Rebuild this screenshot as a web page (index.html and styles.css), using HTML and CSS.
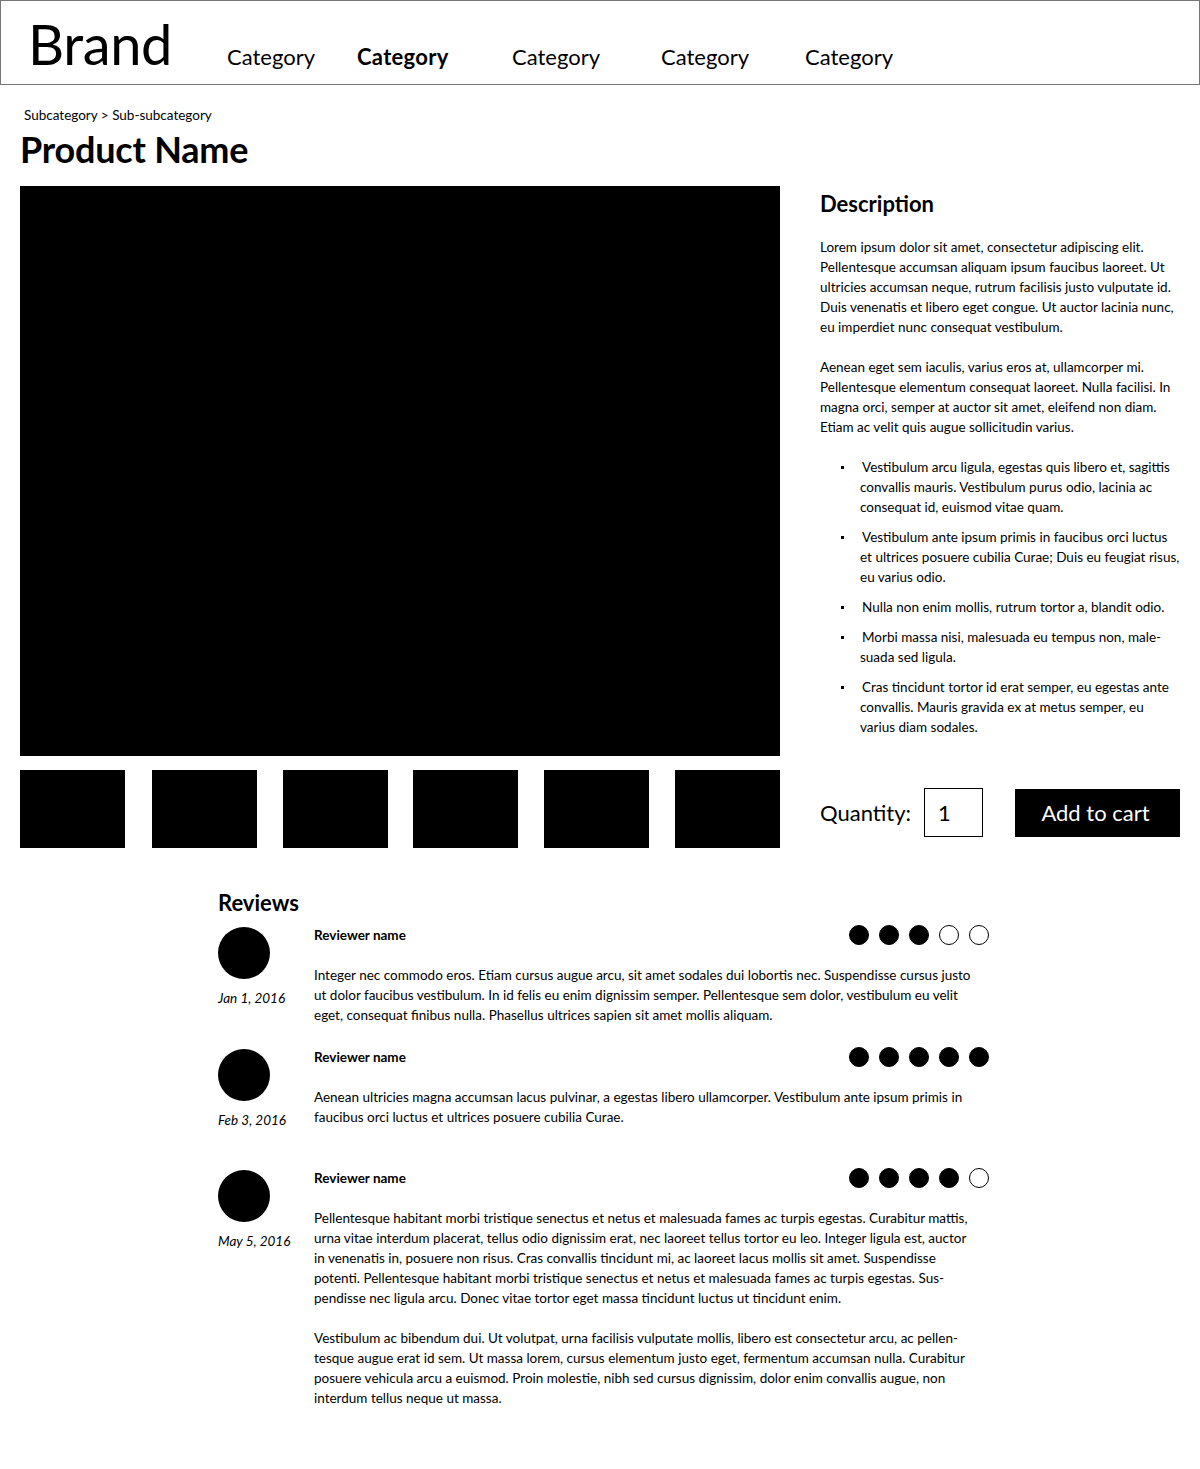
FILE: index.html
```html
<!DOCTYPE html>
<html lang="en">
<head>
<meta charset="utf-8">
<title>Product</title>
<link rel="stylesheet" href="styles.css">
</head>
<body>
<header class="topbar">
  <div class="brand">Brand</div>
  <nav class="nav">
    <a class="nav-item">Category</a>
    <a class="nav-item active">Category</a>
    <a class="nav-item">Category</a>
    <a class="nav-item">Category</a>
    <a class="nav-item">Category</a>
  </nav>
</header>

<main class="page">
  <div class="crumbs">Subcategory &gt; Sub-subcategory</div>
  <h1 class="title">Product Name</h1>

  <section class="product">
    <div class="gallery">
      <div class="main-image"></div>
      <div class="thumbs">
        <div class="thumb"></div>
        <div class="thumb"></div>
        <div class="thumb"></div>
        <div class="thumb"></div>
        <div class="thumb"></div>
        <div class="thumb"></div>
      </div>
    </div>
    <div class="info">
      <div class="desc">
        <h2 class="desc-title">Description</h2>
        <p class="text">Lorem ipsum dolor sit amet, consectetur adipiscing elit.<br>Pellentesque accumsan aliquam ipsum faucibus laoreet. Ut<br>ultricies accumsan neque, rutrum facilisis justo vulputate id.<br>Duis venenatis et libero eget congue. Ut auctor lacinia nunc,<br>eu imperdiet nunc consequat vestibulum.</p>
        <p class="text">Aenean eget sem iaculis, varius eros at, ullamcorper mi.<br>Pellentesque elementum consequat laoreet. Nulla facilisi. In<br>magna orci, semper at auctor sit amet, eleifend non diam.<br>Etiam ac velit quis augue sollicitudin varius.</p>
        <ul class="bullets">
          <li>Vestibulum arcu ligula, egestas quis libero et, sagittis<br>convallis mauris. Vestibulum purus odio, lacinia ac<br>consequat id, euismod vitae quam.</li>
          <li>Vestibulum ante ipsum primis in faucibus orci luctus<br>et ultrices posuere cubilia Curae; Duis eu feugiat risus,<br>eu varius odio.</li>
          <li>Nulla non enim mollis, rutrum tortor a, blandit odio.</li>
          <li>Morbi massa nisi, malesuada eu tempus non, male-<br>suada sed ligula.</li>
          <li>Cras tincidunt tortor id erat semper, eu egestas ante<br>convallis. Mauris gravida ex at metus semper, eu<br>varius diam sodales.</li>
        </ul>
      </div>
      <div class="buy">
        <span class="qty-label">Quantity:</span>
        <div class="qty-box">1</div>
        <button class="cart-btn">Add to cart</button>
      </div>
    </div>
  </section>

  <section class="reviews">
    <h2 class="reviews-title">Reviews</h2>

    <article class="review">
      <div class="who">
        <div class="avatar"></div>
        <div class="date">Jan 1, 2016</div>
      </div>
      <div class="body">
        <div class="head">
          <span class="name">Reviewer name</span>
          <span class="stars"><i class="dot on"></i><i class="dot on"></i><i class="dot on"></i><i class="dot"></i><i class="dot"></i></span>
        </div>
        <p class="text">Integer nec commodo eros. Etiam cursus augue arcu, sit amet sodales dui lobortis nec. Suspendisse cursus justo<br>ut dolor faucibus vestibulum. In id felis eu enim dignissim semper. Pellentesque sem dolor, vestibulum eu velit<br>eget, consequat finibus nulla. Phasellus ultrices sapien sit amet mollis aliquam.</p>
      </div>
    </article>

    <article class="review">
      <div class="who">
        <div class="avatar"></div>
        <div class="date">Feb 3, 2016</div>
      </div>
      <div class="body">
        <div class="head">
          <span class="name">Reviewer name</span>
          <span class="stars"><i class="dot on"></i><i class="dot on"></i><i class="dot on"></i><i class="dot on"></i><i class="dot on"></i></span>
        </div>
        <p class="text">Aenean ultricies magna accumsan lacus pulvinar, a egestas libero ullamcorper. Vestibulum ante ipsum primis in<br>faucibus orci luctus et ultrices posuere cubilia Curae.</p>
      </div>
    </article>

    <article class="review">
      <div class="who">
        <div class="avatar"></div>
        <div class="date">May 5, 2016</div>
      </div>
      <div class="body">
        <div class="head">
          <span class="name">Reviewer name</span>
          <span class="stars"><i class="dot on"></i><i class="dot on"></i><i class="dot on"></i><i class="dot on"></i><i class="dot"></i></span>
        </div>
        <p class="text">Pellentesque habitant morbi tristique senectus et netus et malesuada fames ac turpis egestas. Curabitur mattis,<br>urna vitae interdum placerat, tellus odio dignissim erat, nec laoreet tellus tortor eu leo. Integer ligula est, auctor<br>in venenatis in, posuere non risus. Cras convallis tincidunt mi, ac laoreet lacus mollis sit amet. Suspendisse<br>potenti. Pellentesque habitant morbi tristique senectus et netus et malesuada fames ac turpis egestas. Sus-<br>pendisse nec ligula arcu. Donec vitae tortor eget massa tincidunt luctus ut tincidunt enim.</p>
        <p class="text">Vestibulum ac bibendum dui. Ut volutpat, urna facilisis vulputate mollis, libero est consectetur arcu, ac pellen-<br>tesque augue erat id sem. Ut massa lorem, cursus elementum justo eget, fermentum accumsan nulla. Curabitur<br>posuere vehicula arcu a euismod. Proin molestie, nibh sed cursus dignissim, dolor enim convallis augue, non<br>interdum tellus neque ut massa.</p>
      </div>
    </article>
  </section>
</main>
</body>
</html>
```

FILE: styles.css
```css
* { box-sizing: border-box; }

body {
  margin: 0;
  font-family: Lato, "Liberation Sans", sans-serif;
  color: #000;
  background: #fff;
}

.topbar {
  height: 85px;
  border: 1px solid #777;
  display: flex;
  align-items: flex-end;
  padding-left: 27px;
  padding-bottom: 12px;
}

.brand {
  font-size: 56px;
  line-height: 56px;
  width: 199px;
  letter-spacing: -0.4px;
}

.nav {
  display: grid;
  grid-template-columns: 130px 155px 149px 144px auto;
  padding-bottom: 1px;
}

.nav-item {
  font-size: 22px;
  line-height: 28px;
}

.nav-item.active { font-weight: 700; letter-spacing: 0.3px; }

.page {
  padding: 0 20px;
}

.crumbs {
  font-size: 13.5px;
  line-height: 16px;
  padding: 22px 0 0 4px;
}

.title {
  margin: 6px 0 0;
  font-size: 36px;
  line-height: 40px;
  font-weight: 700;
  letter-spacing: -0.2px;
}

.product {
  display: flex;
  gap: 40px;
  margin-top: 17px;
}

.gallery {
  width: 760px;
  flex: none;
}

.main-image {
  height: 570px;
  background: #000;
}

.thumbs {
  margin-top: 14px;
  display: flex;
  justify-content: space-between;
}

.thumb {
  width: 105px;
  height: 78px;
  background: #000;
}

.thumb:nth-child(2) { margin-left: 1px; }

.info {
  flex: 1;
  display: flex;
  flex-direction: column;
}

.desc-title {
  margin: 5px 0 0;
  font-size: 22px;
  line-height: 26px;
  font-weight: 700;
}

.text {
  margin: 0;
  font-size: 13.5px;
  line-height: 20px;
  white-space: nowrap;
}

.desc .text { margin-top: 20px; }

.bullets {
  margin: 20px 0 0;
  padding: 0 0 0 40px;
  font-size: 13.5px;
  line-height: 20px;
  white-space: nowrap;
  list-style: none;
}

.bullets li {
  position: relative;
  margin-bottom: 10px;
  text-indent: 2px;
}

.bullets li::before {
  content: "";
  position: absolute;
  left: -19px;
  top: 9px;
  width: 3px;
  height: 3px;
  background: #000;
}

.buy {
  margin-top: 41px;
  display: flex;
  align-items: center;
}

.qty-label {
  font-size: 22px;
  line-height: 26px;
  width: 104px;
}

.qty-box {
  width: 59px;
  height: 49px;
  border: 1px solid #000;
  font-size: 22px;
  line-height: 47px;
  padding-left: 13px;
}

.cart-btn {
  margin-left: 32px;
  width: 165px;
  height: 48px;
  border: 0;
  background: #000;
  color: #fff;
  font-family: inherit;
  font-size: 22px;
  padding: 0 4px 0 0;
}

.reviews {
  width: 772px;
  margin: 42px 0 0 198px;
  padding-bottom: 60px;
}

.reviews-title {
  margin: 0;
  font-size: 22px;
  line-height: 26px;
  font-weight: 700;
}

.review {
  display: flex;
  min-height: 121px;
}

.reviews-title + .review { margin-top: 11px; min-height: 122px; }

.who {
  width: 96px;
  flex: none;
}

.avatar {
  width: 52px;
  height: 52px;
  border-radius: 50%;
  background: #000;
}

.date {
  margin-top: 11px;
  font-size: 13.5px;
  line-height: 16px;
  font-style: italic;
}

.body { flex: 1; }

.head {
  display: flex;
  justify-content: space-between;
  align-items: center;
  height: 16px;
}

.name {
  font-size: 13.5px;
  font-weight: 700;
}

.stars {
  display: flex;
  gap: 10px;
  margin-right: 1px;
}

.dot {
  width: 20px;
  height: 20px;
  border-radius: 50%;
  border: 1px solid #000;
  display: block;
}

.dot.on { background: #000; }

.body .text { margin-top: 22px; }
.body .text + .text { margin-top: 20px; }
```
